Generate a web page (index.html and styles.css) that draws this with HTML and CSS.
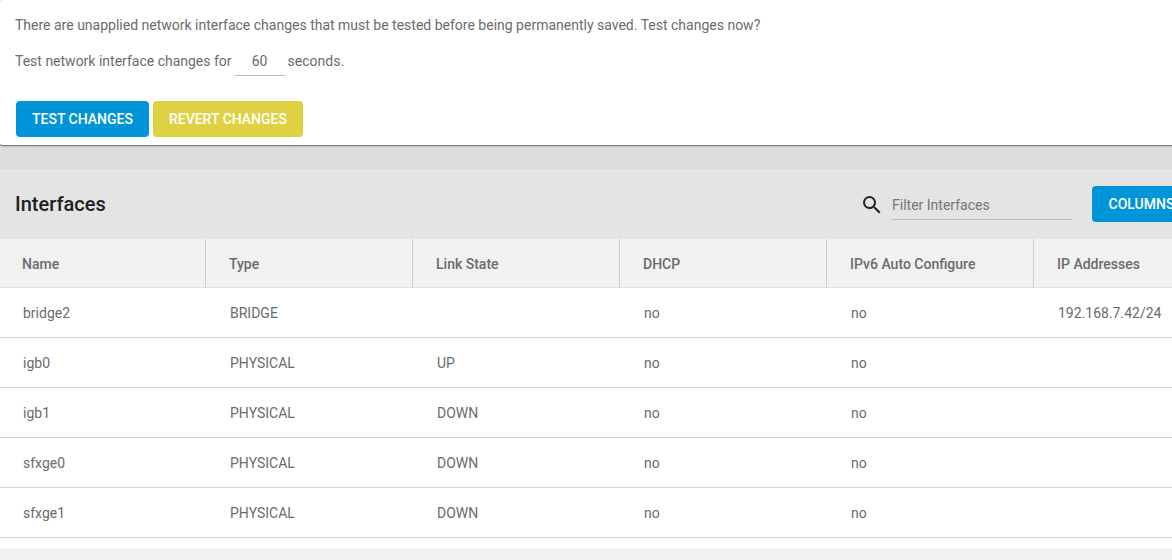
FILE: index.html
```html
<!DOCTYPE html>
<html lang="en">
<head>
<meta charset="utf-8">
<title>Network Interfaces</title>
<link rel="stylesheet" href="styles.css">
</head>
<body>
<main class="page">
  <section class="card notice">
    <p class="message">There are unapplied network interface changes that must be tested before being permanently saved. Test changes now?</p>
    <div class="timeout">
      <label for="seconds">Test network interface changes for</label>
      <input id="seconds" class="seconds" type="text" inputmode="numeric" value="60">
      <span>seconds.</span>
    </div>
    <div class="actions">
      <button class="button primary" type="button">Test Changes</button>
      <button class="button accent" type="button">Revert Changes</button>
    </div>
  </section>
  <section class="card interfaces">
    <header class="toolbar">
      <h1 class="title">Interfaces</h1>
      <div class="search">
        <label class="search-label" for="filter" aria-label="Filter Interfaces">
          <svg class="search-icon" viewBox="0 0 24 24" aria-hidden="true"><path d="M15.5 14h-.79l-.28-.27A6.47 6.47 0 0 0 16 9.5 6.5 6.5 0 1 0 9.5 16c1.61 0 3.09-.59 4.23-1.57l.27.28v.79l5 4.99L20.49 19l-4.99-5zm-6 0C7.01 14 5 11.99 5 9.5S7.01 5 9.5 5 14 7.01 14 9.5 11.99 14 9.5 14z"/></svg>
        </label>
        <input id="filter" class="filter" type="text" placeholder="Filter Interfaces">
      </div>
      <button class="button primary columns" type="button">Columns</button>
    </header>
    <table class="table">
      <thead>
        <tr><th>Name</th><th>Type</th><th>Link State</th><th>DHCP</th><th>IPv6 Auto Configure</th><th>IP Addresses</th></tr>
      </thead>
      <tbody>
        <tr><td>bridge2</td><td>BRIDGE</td><td></td><td>no</td><td>no</td><td>192.168.7.42/24</td></tr>
        <tr><td>igb0</td><td>PHYSICAL</td><td>UP</td><td>no</td><td>no</td><td></td></tr>
        <tr><td>igb1</td><td>PHYSICAL</td><td>DOWN</td><td>no</td><td>no</td><td></td></tr>
        <tr><td>sfxge0</td><td>PHYSICAL</td><td>DOWN</td><td>no</td><td>no</td><td></td></tr>
        <tr><td>sfxge1</td><td>PHYSICAL</td><td>DOWN</td><td>no</td><td>no</td><td></td></tr>
      </tbody>
    </table>
    <footer class="table-footer"></footer>
  </section>
</main>
</body>
</html>
```

FILE: styles.css
```css
* {
  box-sizing: border-box;
}

body {
  margin: 0;
  background: #dcdcdc;
  color: #6b6b6b;
  font: 14px/20px Roboto, "Liberation Sans", sans-serif;
  overflow: hidden;
}

.page {
  display: flex;
  flex-direction: column;
  gap: 24px;
  min-height: 100vh;
}

/* The content area runs past both sides of the window. */
.card {
  margin: 0 -69px 0 -1px;
  border-radius: 4px;
}

.notice {
  padding: 15px 16px 8px;
  background: #fff;
  box-shadow: 0 1px 1px #777, 0 1px 3px rgba(0, 0, 0, 0.2);
}

.message {
  margin: 0;
}

.timeout {
  display: flex;
  align-items: center;
  gap: 3px;
  margin-top: 11px;
}

.seconds,
.filter {
  height: 30px;
  padding: 0;
  border: 0;
  border-bottom: 1px solid #bdbdbd;
  background: transparent;
  color: inherit;
  font: inherit;
  outline: 0;
}

.seconds {
  width: 50px;
  text-align: center;
}

.actions {
  display: flex;
  gap: 4px;
  margin: 25px 0 0 1px;
}

.button {
  height: 36px;
  padding: 0 16px;
  border: 0;
  border-radius: 4px;
  color: #fff;
  font: 500 14px/36px Roboto, "Liberation Sans", sans-serif;
  text-transform: uppercase;
}

.primary {
  background: #0095d9;
}

.accent {
  background: #ded142;
}

.interfaces {
  flex: 1;
  background: #fff;
}

.toolbar {
  display: flex;
  align-items: center;
  height: 70px;
  padding: 0 50px 0 16px;
  border-radius: 4px 4px 0 0;
  background: #e4e4e4;
}

.title {
  flex: 1;
  margin: 0;
  color: #212121;
  font-size: 20px;
  font-weight: 500;
}

.search {
  display: flex;
  align-items: center;
  gap: 8px;
  margin-right: 20px;
  padding-top: 2px;
}

.search-label {
  display: flex;
}

.search-icon {
  width: 24px;
  height: 24px;
  fill: #212121;
}

.filter {
  width: 180px;
}

.filter::placeholder {
  color: #757575;
  opacity: 1;
}

.columns {
  min-width: 99px;
}

.table {
  width: 100%;
  table-layout: fixed;
  border-collapse: separate;
  border-spacing: 0;
}

.table th,
.table td {
  padding: 0 0 0 24px;
  border-bottom: 1px solid #d3d3d3;
  text-align: left;
}

.table th {
  height: 49px;
  padding: 2px 0 0 23px;
  border-right: 1px solid #ccc;
  border-bottom-color: #e0e0e0;
  background: #f1f1f1;
  font-weight: 500;
}

.table td {
  height: 50px;
}

.table-footer {
  height: 40px;
  margin-top: 10px;
  background: #f1f1f1;
}
```
